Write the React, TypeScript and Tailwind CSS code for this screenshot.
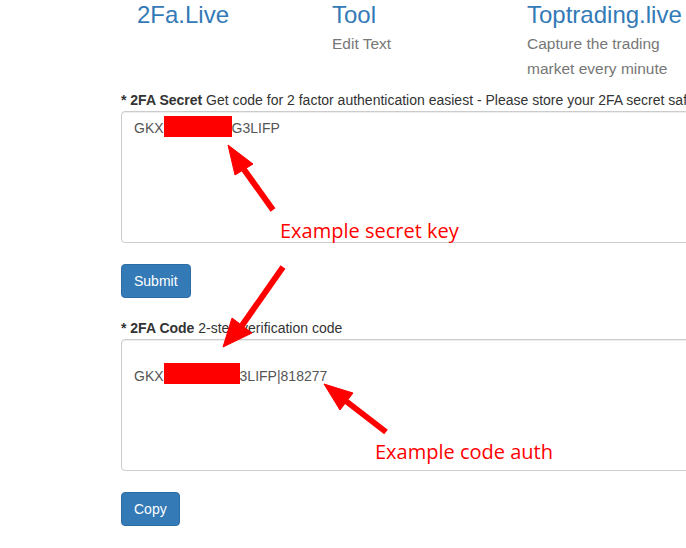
import React from "react";

const Arrow = ({ tail, tip, b1, b2 }: { tail: number[]; tip: number[]; b1: number[]; b2: number[] }) => {
  const mid = [(b1[0] + b2[0]) / 2, (b1[1] + b2[1]) / 2];
  return (
    <g fill="#ff0000" stroke="#ff0000">
      <line x1={tail[0]} y1={tail[1]} x2={mid[0]} y2={mid[1]} strokeWidth={6} />
      <polygon points={`${tip[0]},${tip[1]} ${b1[0]},${b1[1]} ${b2[0]},${b2[1]}`} strokeWidth={1} />
    </g>
  );
};

const Redact = ({ w, shift }: { w: number; shift: string }) => (
  <span className={`relative inline-block h-[21px] align-top bg-[#ff0000] ${shift}`} style={{ width: w }} />
);

export default function App() {
  return (
    <div className="relative w-[686px] h-[548px] overflow-hidden bg-white text-[14px] text-[#333] font-['Liberation_Sans',Arial,sans-serif]">
      {/* top links */}
      <div className="flex pl-[137px] pt-[2px]">
        <div className="w-[195px] shrink-0">
          <div className="text-[24px] leading-[26px] text-[#337ab7]">2Fa.Live</div>
        </div>
        <div className="w-[195px] shrink-0">
          <div className="text-[24px] leading-[26px] text-[#337ab7]">Tool</div>
          <div className="mt-[3px] text-[15.5px] leading-[25px] text-[#777]">Edit Text</div>
        </div>
        <div className="w-[195px] shrink-0">
          <div className="text-[24px] leading-[26px] text-[#337ab7] whitespace-nowrap">Toptrading.live</div>
          <div className="mt-[3px] text-[15.5px] leading-[25px] text-[#777]">
            Capture the trading
            <br />
            market every minute
          </div>
        </div>
      </div>

      {/* form */}
      <div className="pl-[121px] mt-[9px] w-[900px]">
        <div className="leading-[20px] mb-px whitespace-nowrap">
          <span className="font-bold">* 2FA Secret</span> Get code for 2 factor authentication easiest - Please store your 2FA secret safely
        </div>
        <div className="w-[620px] h-[132px] border border-[#ccc] rounded-[4px] px-[12px] py-[6px] leading-[20px] text-[#555] shadow-[inset_0_1px_1px_rgba(0,0,0,0.075)] whitespace-nowrap">
          GKX<Redact w={68} shift="-top-[2px]" />G3LIFP
        </div>
        <button className="mt-[21px] h-[34px] px-[12px] bg-[#337ab7] border border-[#2e6da4] rounded-[4px] text-white leading-[20px]">
          Submit
        </button>

        <div className="mt-[20px] leading-[20px] mb-px whitespace-nowrap">
          <span className="font-bold">* 2FA Code</span> 2-step verification code
        </div>
        <div className="w-[620px] h-[132px] border border-[#ccc] rounded-[4px] px-[12px] py-[6px] leading-[20px] text-[#555] shadow-[inset_0_1px_1px_rgba(0,0,0,0.075)] whitespace-nowrap">
          <div className="h-[20px]" />
          <div>
            GKX<Redact w={76} shift="-top-[3px]" />3LIFP|818277
          </div>
        </div>
        <button className="mt-[21px] h-[34px] px-[12px] bg-[#337ab7] border border-[#2e6da4] rounded-[4px] text-white leading-[20px]">
          Copy
        </button>
      </div>

      {/* annotations drawn over the screenshot */}
      <svg className="absolute inset-0 pointer-events-none" width="686" height="548">
        <Arrow tail={[273, 210]} tip={[228, 145]} b1={[235, 175]} b2={[253, 164]} />
        <Arrow tail={[283, 267]} tip={[223, 347]} b1={[232, 318]} b2={[252, 333]} />
        <Arrow tail={[386, 432]} tip={[324, 384]} b1={[340, 410]} b2={[353, 393]} />
      </svg>
      <div className="absolute left-[280px] top-[219px] text-[20px] leading-[24px] text-[#ff0000] whitespace-nowrap font-['Open_Sans',sans-serif]">
        Example secret key
      </div>
      <div className="absolute left-[375px] top-[440px] text-[20px] leading-[24px] text-[#ff0000] whitespace-nowrap font-['Open_Sans',sans-serif]">
        Example code auth
      </div>
    </div>
  );
}
